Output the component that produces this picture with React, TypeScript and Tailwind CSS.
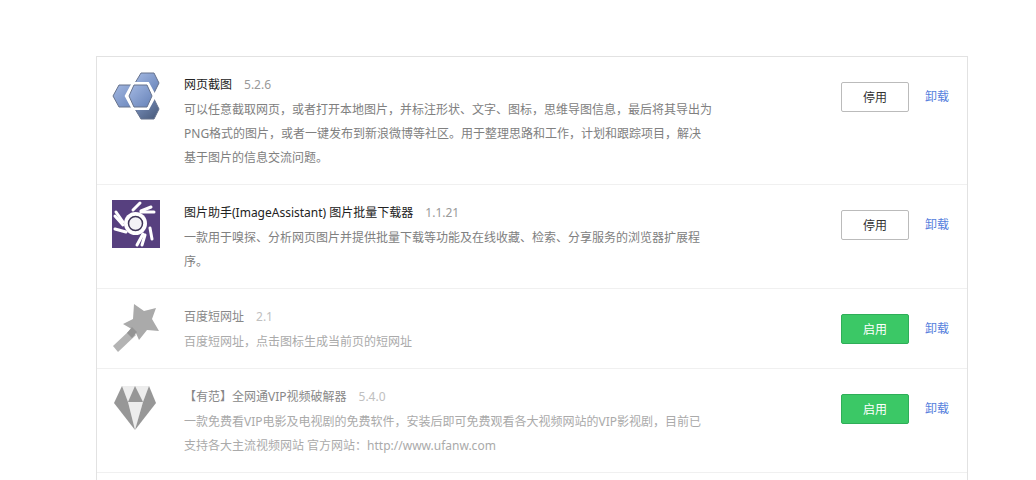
import { useState } from "react";
import type { ReactNode } from "react";
import clsx from "clsx";

interface Extension {
  id: string;
  name: string;
  version: string;
  description: string;
  enabled: boolean;
  icon: ReactNode;
}

const HexagonIcon = () => (
  <svg viewBox="0 0 48 48" className="w-12 h-12" aria-hidden="true">
    <defs>
      <linearGradient id="hexLight" x1="0" y1="0" x2="1" y2="1">
        <stop offset="0" stopColor="#a3b8e2" />
        <stop offset="1" stopColor="#6682b8" />
      </linearGradient>
      <linearGradient id="hexDark" x1="0" y1="0" x2="1" y2="1">
        <stop offset="0" stopColor="#7f96c4" />
        <stop offset="1" stopColor="#465878" />
      </linearGradient>
    </defs>
    <g stroke="#66728c" strokeWidth="1" strokeLinejoin="round">
      <polygon points="29,1 42,1 47,11 42,21 29,21 23,11" fill="url(#hexLight)" />
      <polygon points="7,13 20,13 26,24 20,35 7,35 1,24" fill="url(#hexLight)" />
      <polygon points="29,27 42,27 47,37 42,47 29,47 23,37" fill="url(#hexDark)" />
    </g>
    <polygon
      points="22,13 35,13 41,24 35,35 22,35 16,24"
      fill="#fff"
      stroke="#fff"
      strokeWidth="6"
    />
    <polygon
      points="22,13 35,13 40,24 35,35 22,35 17,24"
      fill="url(#hexLight)"
      stroke="#66728c"
      strokeWidth="1"
    />
  </svg>
);

const ApertureIcon = () => (
  <svg viewBox="0 0 48 48" className="w-12 h-12" aria-hidden="true">
    <rect width="48" height="48" fill="#57407f" />
    <g stroke="#fff" strokeWidth="3" strokeLinecap="round">
      <path d="M28 3 21 10" />
      <path d="M39 7 29 11" />
      <path d="M42 12 29 12" />
      <path d="M4 12 11 22" />
      <path d="M3 16 11 25" />
      <path d="M3 29 14 32" />
      <path d="M38 28 40 39" />
      <path d="M31 34 25 45" />
      <path d="M33 35 30 45" />
    </g>
    <circle cx="23.5" cy="23.5" r="11.5" fill="#fff" />
    <circle cx="23.5" cy="23.5" r="7" fill="#f3f2f6" stroke="#3f3658" strokeWidth="1.5" />
  </svg>
);

const WandIcon = () => (
  <svg viewBox="0 0 48 48" className="w-12 h-12" aria-hidden="true">
    <polygon points="18,26 24,31 6,48 1,42" fill="#b3b3b3" />
    <polygon
      points="22,0 32,7 44,4 40,15 47,27 35,26 27,36 23,27 11,20 21,15"
      fill="#aaa"
    />
    <polygon points="20,23 25,28 20,34 15,29" fill="#949494" />
  </svg>
);

const DiamondIcon = () => (
  <svg viewBox="0 0 48 48" className="w-12 h-12" aria-hidden="true">
    <polygon points="10,2 37,2 31,18 23,46 16,18" fill="#ededed" />
    <polygon points="10,2 16,18 23,46 2,19" fill="#979797" />
    <polygon points="37,2 31,18 23,46 44,19" fill="#979797" />
    <polygon points="23,2 31,18 16,18" fill="#979797" />
  </svg>
);

const initialExtensions: Extension[] = [
  {
    id: "screenshot",
    name: "网页截图",
    version: "5.2.6",
    description:
      "可以任意截取网页，或者打开本地图片，并标注形状、文字、图标，思维导图信息，最后将其导出为PNG格式的图片，或者一键发布到新浪微博等社区。用于整理思路和工作，计划和跟踪项目，解决基于图片的信息交流问题。",
    enabled: true,
    icon: <HexagonIcon />,
  },
  {
    id: "image-assistant",
    name: "图片助手(ImageAssistant) 图片批量下载器",
    version: "1.1.21",
    description:
      "一款用于嗅探、分析网页图片并提供批量下载等功能及在线收藏、检索、分享服务的浏览器扩展程序。",
    enabled: true,
    icon: <ApertureIcon />,
  },
  {
    id: "short-url",
    name: "百度短网址",
    version: "2.1",
    description: "百度短网址，点击图标生成当前页的短网址",
    enabled: false,
    icon: <WandIcon />,
  },
  {
    id: "vip-video",
    name: "【有范】全网通VIP视频破解器",
    version: "5.4.0",
    description:
      "一款免费看VIP电影及电视剧的免费软件，安装后即可免费观看各大视频网站的VIP影视剧，目前已支持各大主流视频网站 官方网站：http://www.ufanw.com",
    enabled: false,
    icon: <DiamondIcon />,
  },
];

interface RowProps {
  extension: Extension;
  onToggle: (id: string) => void;
}

const ExtensionRow = ({ extension, onToggle }: RowProps) => {
  const { id, name, version, description, enabled, icon } = extension;

  return (
    <li className="flex items-start pt-[15px] pb-[14px] px-[15px] border-b border-[#f0f0f0]">
      <div className="shrink-0">{icon}</div>

      <div className="mt-px ml-6 w-[528px] leading-6">
        <h2 className={clsx("mb-px", enabled ? "text-[#222]" : "text-[#888]")}>
          {name}
          <span className={clsx("ml-3", enabled ? "text-[#999]" : "text-[#c0c0c0]")}>
            {version}
          </span>
        </h2>
        <p className={enabled ? "text-[#808080]" : "text-[#aaa]"}>{description}</p>
      </div>

      {/* Actions */}
      <div className="flex items-center gap-4 mt-[10px] mr-[3px] ml-auto shrink-0">
        <button
          type="button"
          onClick={() => onToggle(id)}
          className={clsx(
            "w-[68px] h-[30px] pt-0.5 border rounded-xs cursor-pointer",
            enabled
              ? "bg-white border-[#bbb] text-[#333]"
              : "bg-[#3bc866] border-[#2fae58] text-white"
          )}
        >
          {enabled ? "停用" : "启用"}
        </button>
        <a href={`#uninstall-${id}`} className="text-[#5580dd]">
          卸载
        </a>
      </div>
    </li>
  );
};

const App = () => {
  const [extensions, setExtensions] = useState(initialExtensions);

  const handleToggle = (id: string) => {
    setExtensions((list) =>
      list.map((item) =>
        item.id === id ? { ...item, enabled: !item.enabled } : item
      )
    );
  };

  return (
    <main
      lang="zh-CN"
      className="flex flex-col min-h-screen pt-14 pl-24 pr-[68px] bg-white text-xs font-['Noto_Sans','Noto_Sans_CJK_SC',sans-serif]"
    >
      <ul className="flex-1 border border-b-0 border-[#e2e2e2]">
        {extensions.map((extension) => (
          <ExtensionRow
            key={extension.id}
            extension={extension}
            onToggle={handleToggle}
          />
        ))}
      </ul>
    </main>
  );
};

export default App;
